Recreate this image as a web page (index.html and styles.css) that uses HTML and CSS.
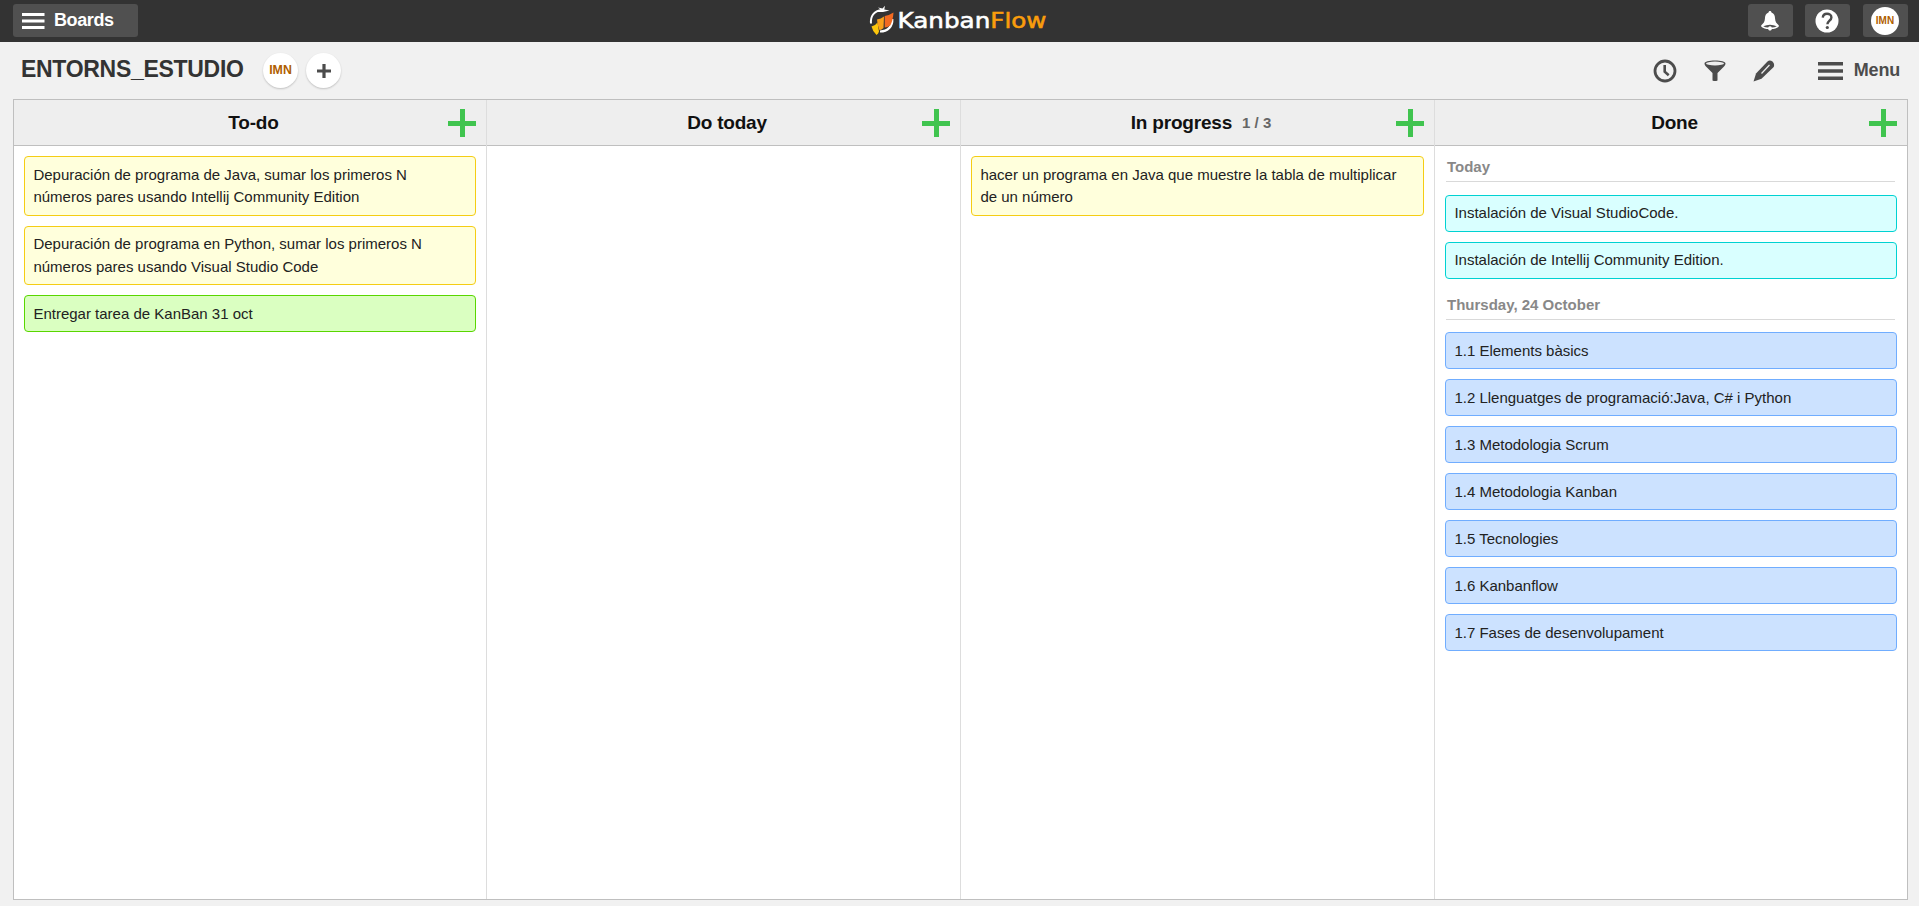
FILE: index.html
```html
<!DOCTYPE html>
<html lang="es">
<head>
<meta charset="utf-8">
<title>ENTORNS_ESTUDIO - KanbanFlow</title>
<link rel="stylesheet" href="styles.css">
</head>
<body>
<header class="topbar">
  <div class="side">
    <button class="btn boards">
      <svg width="23" height="18" viewBox="0 0 23 18"><path d="M0 2.5h22.5M0 9h22.5M0 15.500h22.5" stroke="#fff" stroke-width="3"/></svg>
      <span>Boards</span>
    </button>
  </div>
  <svg class="logo" width="180" height="36" viewBox="868 2 180 36">
    <path d="M871 23.500C870.300 17 873.500 10.500 882 10.300" fill="none" stroke="#fff" stroke-width="2"/>
    <path d="M880 31.500C888 31.500 892.800 26 892.300 19" fill="none" stroke="#fff" stroke-width="2.200"/>
    <path d="M875.500 12L880.500 9.500L878 7.500L882.500 8.600L885 5.800L884.300 9.500L889.500 10.500L883 12Z" fill="#fff"/>
    <path d="M871.500 26.500Q875.500 25.500 877.500 22.500L879 31.500Q878.500 33.500 876.500 35Q872.500 31 871.500 26.500Z" fill="#fdc70c"/>
    <path d="M877 19.500Q881 18.800 884 16.500L883.500 28Q881.500 30 879.500 30.300Q877.300 25 877 19.500Z" fill="#f9a11b"/>
    <path d="M884.700 16Q889.500 15.200 893.500 12.500Q893 20.500 890.200 25.500Q887.500 27.500 884.700 27.500Z" fill="#f26a21"/>
    <text class="wordmark" x="897.500" y="27.500" textLength="149" lengthAdjust="spacingAndGlyphs">Kanban<tspan class="flow">Flow</tspan></text>
  </svg>
  <div class="side right">
    <button class="btn"><svg width="20" height="20" viewBox="0 0 22 22"><path d="M11 0c1 0 1.600.7 1.600 1.700 3 .9 3.800 3.500 4 6.800.2 3.500 1.500 4.800 4 7.200.8 1.500-.8 2.800-3.600 3.500-1.500.4-2.800.6-4 .6-.3 1.200-1 1.700-2 1.700s-1.700-.5-2-1.700c-1.200 0-2.500-.2-4-.6C2.200 18.500.6 17.200 1.400 15.700c2.500-2.400 3.800-3.700 4-7.200.2-3.300 1-5.900 4-6.800C9.400.7 10 0 11 0Z" fill="#fff"/><path d="M3.500 16.800q7.500-3.300 15 0-2.500 1.300-5.500 1.300-.5-1.200-2-1.200t-2 1.200q-3 0-5.500-1.300Z" fill="#505050"/></svg></button>
    <button class="btn"><svg width="24" height="24" viewBox="0 0 24 24"><circle cx="12" cy="12" r="11.500" fill="#fff"/><path d="M7.800 8.700C8 6 9.700 4.800 12 4.800s4.400 1.400 4.400 3.600c0 3-4 3.400-4 6.800" fill="none" stroke="#4c4c4c" stroke-width="2.400"/><circle cx="12.300" cy="18.500" r="1.600" fill="#4c4c4c"/></svg></button>
    <button class="btn user"><span class="avatar small">IMN</span></button>
  </div>
</header>

<section class="titlebar">
  <h1>ENTORNS_ESTUDIO</h1>
  <span class="avatar first">IMN</span>
  <span class="avatar"><svg width="14" height="14" viewBox="0 0 14 14"><path d="M7 0v14M0 7h14" stroke="#4c4c4c" stroke-width="3.200"/></svg></span>
  <nav class="tools">
    <svg width="24" height="24" viewBox="0 0 24 24"><circle cx="12" cy="12" r="10" fill="none" stroke="#4c4c4c" stroke-width="2.800"/><path d="M11.700 6v6.700l4 3.500" fill="none" stroke="#4c4c4c" stroke-width="2.600"/></svg>
    <svg class="funnel" width="22" height="22" viewBox="0 0 22 22"><path d="M.5 3.500C.5 1.500 5 .5 11 .5s10.500 1 10.500 3c0 1.500-1 2.500-2.500 4L13.500 13v7.500q-2.500 1.200-5 0V13L3 7.500C1.500 6 .5 5 .5 3.500Z" fill="#4c4c4c"/><ellipse cx="11" cy="3.500" rx="9" ry="1.900" fill="#eee"/></svg>
    <svg class="pencil" width="22" height="22" viewBox="0 0 22 22"><path d="M.5 21.500L3 13.500 14.500 1.600Q16.500-.3 19.500 1.500 22 4 20.700 7L8.500 18.800Z" fill="#4c4c4c"/><path d="M8.500 13.500L16.500 5" stroke="#eee" stroke-width="1.200"/></svg>
    <svg class="bars" width="25" height="18" viewBox="0 0 25 18"><path d="M0 1.800h25M0 9h25M0 16.200h25" stroke="#4c4c4c" stroke-width="3.400"/></svg>
    <span class="menu">Menu</span>
  </nav>
</section>

<main class="board">
  <section class="column">
    <header class="head"><h2>To-do</h2><i class="add"></i></header>
    <div class="cards">
      <article class="card yellow">Depuración de programa de Java, sumar los primeros N<br>números pares usando Intellij Community Edition</article>
      <article class="card yellow">Depuración de programa en Python, sumar los primeros N<br>números pares usando Visual Studio Code</article>
      <article class="card green">Entregar tarea de KanBan 31 oct</article>
    </div>
  </section>
  <section class="column">
    <header class="head"><h2>Do today</h2><i class="add"></i></header>
  </section>
  <section class="column">
    <header class="head"><h2>In progress</h2><small>1 / 3</small><i class="add"></i></header>
    <div class="cards">
      <article class="card yellow">hacer un programa en Java que muestre la tabla de multiplicar<br>de un número</article>
    </div>
  </section>
  <section class="column">
    <header class="head"><h2>Done</h2><i class="add"></i></header>
    <div class="cards">
      <h3>Today</h3>
      <article class="card cyan">Instalación de Visual StudioCode.</article>
      <article class="card cyan">Instalación de Intellij Community Edition.</article>
      <h3 class="later">Thursday, 24 October</h3>
      <article class="card blue">1.1 Elements bàsics</article>
      <article class="card blue">1.2 Llenguatges de programació:Java, C# i Python</article>
      <article class="card blue">1.3 Metodologia Scrum</article>
      <article class="card blue">1.4 Metodologia Kanban</article>
      <article class="card blue">1.5 Tecnologies</article>
      <article class="card blue">1.6 Kanbanflow</article>
      <article class="card blue">1.7 Fases de desenvolupament</article>
    </div>
  </section>
</main>
</body>
</html>
```
FILE: styles.css
```css
* { box-sizing: border-box; }
body {
  margin: 0;
  height: 906px;
  display: flex;
  flex-direction: column;
  overflow: hidden;
  background: #f1f1f1;
  color: #222;
  font: 15px/22.5px "Liberation Sans", Arial, sans-serif;
}
svg { display: block; flex: none; }
h1, h2, h3 { margin: 0; }

.topbar {
  height: 42px;
  flex: none;
  display: flex;
  align-items: flex-start;
  padding: 4px 11px 0 13px;
  background: #333;
}
.side { flex: 1; display: flex; }
.right { justify-content: flex-end; gap: 12px; }
.btn {
  width: 45px;
  height: 33px;
  padding: 0 1px 0 0;
  display: flex;
  align-items: center;
  justify-content: center;
  border: 0;
  border-radius: 3px;
  background: #505050;
  color: #fff;
}
.user { margin-left: 1px; }
.boards {
  width: 125px;
  justify-content: flex-start;
  padding: 0 0 0 9px;
  gap: 9px;
  font: bold 18px/31px "Liberation Sans", Arial, sans-serif;
  letter-spacing: -.4px;
}
.boards span { padding-bottom: 1px; }
.logo { margin: -2px 3px 0 -3px; }
.wordmark { font: 22px "DejaVu Sans", sans-serif; fill: #fff; stroke: #fff; stroke-width: .6px; }
.flow { fill: #f99d0c; stroke: #f99d0c; }

.titlebar {
  height: 57px;
  flex: none;
  display: flex;
  align-items: flex-start;
  padding: 11px 19px 0 21px;
}
h1 { width: 222px; margin-right: 20px; font-size: 23px; letter-spacing: -.3px; line-height: 32px; color: #333; white-space: nowrap; }
.avatar {
  width: 35px;
  height: 35px;
  flex: none;
  display: flex;
  align-items: center;
  justify-content: center;
  border-radius: 50%;
  background: #fff;
  color: #b06000;
  font-size: 12.4px;
  font-weight: bold;
  box-shadow: 0 1px 2px rgba(0, 0, 0, .2);
}
.first { margin-right: 8px; }
.small { width: 28px; height: 28px; font-size: 10px; box-shadow: none; }
.tools { margin-left: auto; display: flex; align-items: center; height: 35px; color: #4c4c4c; }
.funnel { margin-left: 27px; }
.pencil { margin-left: 27px; }
.bars { margin-left: 43px; }
.menu { margin-left: 11px; padding-bottom: 2px; font-size: 18px; font-weight: bold; line-height: 32px; letter-spacing: -.2px; }

.board {
  width: 1895px;
  height: 801px;
  margin-left: 13px;
  display: grid;
  grid-template-columns: 473px 474px 474px 472px;
  border: 1px solid #bfbfbf;
  background: #fff;
}
.column { border-right: 1px solid #ddd; }
.column:last-child { border-right: 0; }
.head {
  position: relative;
  height: 46px;
  display: flex;
  align-items: center;
  justify-content: center;
  gap: 10px;
  padding-left: 7px;
  border-bottom: 1px solid #bfbfbf;
  background: #eee;
  color: #111;
}
h2 { font-size: 19px; line-height: 44px; letter-spacing: -.2px; }
.head small { padding-top: 2px; font-size: 15px; font-weight: bold; color: #666; }
.add {
  position: absolute;
  right: 10px;
  top: 9px;
  width: 28px;
  height: 28px;
  background:
    linear-gradient(#40c44f, #40c44f) center / 28px 5px no-repeat,
    linear-gradient(#40c44f, #40c44f) center / 5px 28px no-repeat;
}
.cards { padding: 10px 10px 0; }
.card { margin-bottom: 10px; padding: 6.75px 8.4px 5.75px; border: 1px solid; border-radius: 4px; }
.yellow { background: #ffffdc; border-color: #f5cd14; }
.green { background: #daffc1; border-color: #59d600; }
.cyan { padding-top: 6px; padding-bottom: 6.5px; background: #d9ffff; border-color: #00d2d2; }
.blue { background: #cce2ff; border-color: #70adff; }
h3 {
  height: 26px;
  margin: 0 2px 13px 1px;
  padding: 0 1px;
  border-bottom: 1px solid #d9d9d9;
  color: #888;
  font-size: 15px;
  line-height: 22px;
}
.later { height: 31px; margin-bottom: 12px; padding-top: 5px; }
```
